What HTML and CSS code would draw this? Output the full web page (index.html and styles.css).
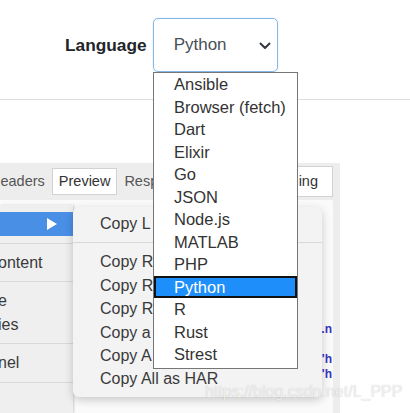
FILE: index.html
```html
<!DOCTYPE html>
<html lang="en">
<head>
  <meta charset="UTF-8">
  <meta name="viewport" content="width=device-width, initial-scale=1.0">
  <title>Language picker</title>
  <link rel="stylesheet" href="styles.css">
</head>
<body>

<div class="page">
  <header class="toolbar">
    <label class="lang-label">Language</label>
    <div class="select">
      <span>Python</span>
      <svg class="chevron" width="12" height="8" viewBox="0 0 12 8">
        <path d="M1.5 1.5 L6 6 L10.5 1.5" fill="none" stroke="#343a40" stroke-width="2" stroke-linecap="round" stroke-linejoin="round"/>
      </svg>
    </div>
  </header>

  <section class="shot">
    <div class="tabs">
      <span class="tab tab-first">Headers</span>
      <span class="tab tab-on">Preview</span>
      <span class="tab">Response</span>
      <span class="tab tab-on tab-last">Timing</span>
    </div>
    <div class="panel">
      <pre class="code">.n

'h
'h</pre>
    </div>

    <div class="menu menu-main">
      <div class="row row-hot"><span class="arrow"></span></div>
      <div class="sep"></div>
      <div class="row">ontent</div>
      <div class="sep"></div>
      <div class="row">e</div>
      <div class="row">ies</div>
      <div class="sep"></div>
      <div class="row">nel</div>
      <div class="sep"></div>
    </div>

    <div class="menu menu-sub">
      <div class="row">Copy L</div>
      <div class="sep"></div>
      <div class="row">Copy R</div>
      <div class="row">Copy R</div>
      <div class="row">Copy R</div>
      <div class="row">Copy a</div>
      <div class="row">Copy A</div>
      <div class="row">Copy All as HAR</div>
    </div>
  </section>

  <ul class="options">
    <li>Ansible</li>
    <li>Browser (fetch)</li>
    <li>Dart</li>
    <li>Elixir</li>
    <li>Go</li>
    <li>JSON</li>
    <li>Node.js</li>
    <li>MATLAB</li>
    <li>PHP</li>
    <li class="picked">Python</li>
    <li>R</li>
    <li>Rust</li>
    <li>Strest</li>
  </ul>

  <div class="watermark">https://blog.csdn.net/L_PPP</div>
</div>

</body>
</html>
```

FILE: styles.css
```css
* {
  box-sizing: border-box;
  margin: 0;
  padding: 0;
}

body {
  background: #fff;
  font-family: 'Liberation Sans', Arial, sans-serif;
  overflow: hidden;
}

.page {
  position: relative;
  width: 410px;
  height: 413px;
  overflow: hidden;
}

.toolbar {
  height: 100px;
  display: flex;
  align-items: flex-start;
  padding: 18px 0 0 65px;
  border-bottom: 1px solid #dedede;
}

.lang-label {
  font-size: 17.3px;
  font-weight: bold;
  color: #212529;
  line-height: 54px;
  margin-right: 6px;
}

.select {
  width: 125px;
  height: 54px;
  display: flex;
  align-items: center;
  justify-content: space-between;
  padding: 0 6px 0 20px;
  border: 1px solid #86b6e6;
  border-radius: 5px;
  box-shadow: 0 0 2px rgba(80, 150, 230, 0.25);
  font-size: 17px;
  color: #495057;
}

.chevron {
  margin-top: 2px;
}

/* devtools screenshot under the picker */
.shot {
  position: relative;
  width: 340px;
  height: 250px;
  margin-top: 63px;
  background: #ededed;
  overflow: hidden;
}

.tabs {
  height: 37px;
  display: flex;
  align-items: center;
}

.tab {
  height: 27px;
  line-height: 25px;
  padding: 0 6px;
  border: 1px solid transparent;
  font-size: 14.5px;
  color: #555;
}

.tab-first {
  margin-left: -17px;
}

.tab-on {
  background: #fff;
  border-color: #d2d2d2;
  color: #333;
}

.tab-last {
  height: 31px;
  line-height: 29px;
  margin-left: auto;
  margin-right: 7px;
  padding-right: 14px;
}

.panel {
  height: 213px;
  margin-right: 7px;
  background: #fafafa;
}

.code {
  padding-top: 122px;
  padding-right: 1px;
  text-align: right;
  font-family: 'Liberation Sans', Arial, sans-serif;
  font-size: 12px;
  font-weight: bold;
  line-height: 15px;
  color: #3535c2;
}

.menu {
  position: absolute;
  font-size: 16px;
  color: #3a3a3a;
}

.menu .row {
  height: 23.4px;
  line-height: 23.4px;
  white-space: nowrap;
}

.menu .sep {
  height: 1px;
  margin: 7px 0;
  background: #d9d9d9;
}

.menu-main {
  left: 0;
  top: 42px;
  bottom: 0;
  width: 73px;
  padding-top: 7px;
  background: #efefef;
  box-shadow: 1px 0 2px rgba(0, 0, 0, 0.18);
}

.menu-main .row {
  margin-left: -2px;
}

.menu-main .row-hot {
  height: 24px;
  margin-left: 0;
  display: flex;
  align-items: center;
  justify-content: flex-end;
  padding-right: 16px;
  background: #4a8fe6;
}

.arrow {
  width: 0;
  height: 0;
  border-left: 10px solid #fff;
  border-top: 6px solid transparent;
  border-bottom: 6px solid transparent;
}

.menu-sub {
  left: 73px;
  top: 44px;
  width: 249px;
  padding: 5px 0 6px;
  background: #f3f3f3;
  border-radius: 6px;
  box-shadow: 0 3px 10px rgba(0, 0, 0, 0.2);
}

.menu-sub .row {
  padding-left: 27px;
}

/* open option list of the select */
.options {
  position: absolute;
  left: 153px;
  top: 72px;
  width: 145px;
  padding-bottom: 2px;
  list-style: none;
  background: #fff;
  border: 1px solid #767676;
}

.options li {
  height: 22.5px;
  line-height: 22.5px;
  padding-left: 20px;
  font-size: 16.5px;
  color: #333;
  white-space: nowrap;
}

.options .picked {
  background: #1e8ffa;
  color: #fff;
  box-shadow: inset 0 0 0 2px #111;
}

.watermark {
  position: absolute;
  left: 205px;
  top: 383px;
  font-size: 16px;
  color: rgba(255, 255, 255, 0.75);
  text-shadow: 0 0 1px rgba(0, 0, 0, 0.25);
}
```
